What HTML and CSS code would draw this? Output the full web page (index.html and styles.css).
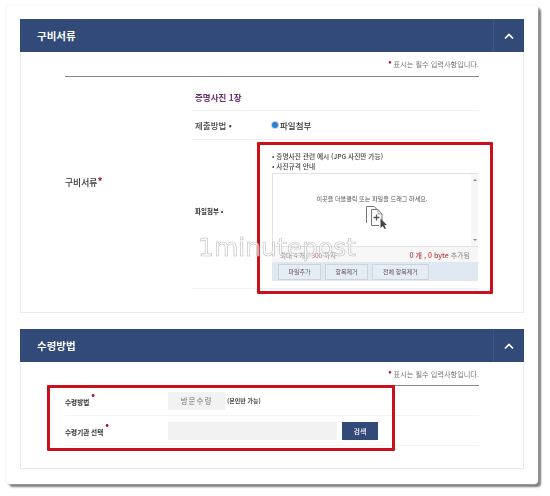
FILE: index.html
```html
<!DOCTYPE html>
<html lang="ko">
<head>
<meta charset="utf-8">
<title>구비서류</title>
<link rel="stylesheet" href="styles.css">
</head>
<body>
<main class="card">
  <section class="panel">
    <header class="panel-head">
      <h2>구비서류</h2>
      <span class="toggle"><svg width="12" height="8" viewBox="0 0 12 8"><path d="M2 6.500 6 2.500l4 4" fill="none" stroke="#fff" stroke-width="1.700"/></svg></span>
    </header>
    <div class="panel-body docs-body">
      <p class="note note-tall"><i>•</i> 표시는 필수 입력사항입니다.</p>
      <div class="doc-table">
        <div class="doc-label">구비서류<i>*</i></div>
        <div class="doc-rows">
          <div class="row-title">증명사진 1장</div>
          <div class="row-method">
            <span class="method-label">제출방법 •</span>
            <span class="radio"></span>
            <span class="method-value">파일첨부</span>
          </div>
          <div class="row-file">
            <span class="file-label">파일첨부 •</span>
            <div class="file-content">
              <ul class="hints">
                <li>• 증명사진 관련 예시 (JPG 사진만 가능)</li>
                <li>• 사진규격 안내</li>
              </ul>
              <div class="uploader">
                <div class="drop">
                  <div class="drop-main">
                    <p>이곳을 더블클릭 또는 파일을 드래그 하세요.</p>
                    <svg class="drop-icon" width="24" height="24" viewBox="0 0 24 24">
                      <path d="M1.500 18V1.500H9l3 3" fill="none" stroke="#777"/>
                      <path d="M6.500 20.500V4.500H13l4 4.500v7M6.500 20.500H14" fill="#fff" stroke="#777"/>
                      <path d="M13 4.500V9h4" fill="none" stroke="#999"/>
                      <path d="M11.500 9.500v6M8.500 12.500h6" stroke="#555" stroke-width="1.300"/>
                      <path d="M15.500 13.500l6.500 6.500-2.800.3 1.800 3-1.500.7-1.700-3-2.300 2z" fill="#444"/>
                    </svg>
                  </div>
                  <div class="scroll"><span class="up"></span><span class="down"></span></div>
                </div>
                <div class="status">
                  <span class="limit">최대 4 개 / <b>300</b> 까지</span>
                  <span class="count"><b>0 개 , 0 byte</b> 추가됨</span>
                </div>
                <div class="actions">
                  <span class="act">파일추가</span>
                  <span class="act">항목제거</span>
                  <span class="act wide">전체 항목제거</span>
                </div>
              </div>
            </div>
          </div>
        </div>
      </div>
      <div class="red-box red-one"></div>
      <div class="watermark">1minutepost</div>
    </div>
  </section>

  <section class="panel second">
    <header class="panel-head">
      <h2>수령방법</h2>
      <span class="toggle"><svg width="12" height="8" viewBox="0 0 12 8"><path d="M2 6.500 6 2.500l4 4" fill="none" stroke="#fff" stroke-width="1.700"/></svg></span>
    </header>
    <div class="panel-body receive-body">
      <p class="note"><i>•</i> 표시는 필수 입력사항입니다.</p>
      <div class="receive-rows">
        <div class="receive-row">
          <span class="receive-label">수령방법<i>•</i></span>
          <span class="field short">방문수령</span>
          <span class="only">(본인만 가능)</span>
        </div>
        <div class="receive-row">
          <span class="receive-label">수령기관 선택<i>•</i></span>
          <span class="field long"></span>
          <span class="search">검색</span>
        </div>
      </div>
      <div class="red-box red-two"></div>
    </div>
  </section>
</main>
</body>
</html>
```
FILE: styles.css
```css
* { box-sizing: border-box; }
html, body { margin: 0; padding: 0; background: #fff; }
body {
  width: 550px;
  height: 496px;
  overflow: hidden;
  font-family: "Noto Sans CJK KR", "Noto Sans", sans-serif;
  color: #333;
}
.card {
  margin: 5px 0 0 6px;
  width: 532px;
  height: 479px;
  padding: 14px;
  background: #fff;
  border-radius: 4px;
  box-shadow: 0 0 2px #ddd, 3px 3px 2px #7c7c7c;
  filter: blur(.35px);
}
.panel.second { margin-top: 16px; }
.panel-head {
  height: 33px;
  display: flex;
  align-items: center;
  justify-content: space-between;
  background: #324a78;
  color: #fff;
}
.panel-head h2 {
  margin: 0 0 0 17px;
  font-size: 10.500px;
  font-weight: 700;
}
.toggle {
  width: 31px;
  height: 100%;
  display: flex;
  align-items: center;
  justify-content: center;
  border-left: 1px solid #3f5784;
}
.panel-body {
  position: relative;
  padding: 0 44px;
  border: 1px solid #e9e9e9;
  border-top: 0;
}
.docs-body { height: 261px; }
.receive-body { height: 107px; }
.note {
  margin: 0;
  height: 24px;
  padding-top: 6px;
  text-align: right;
  font-size: 7.200px;
  line-height: 11px;
  color: #777;
  border-bottom: 1px solid #888;
}
.note-tall { height: 25px; }
.note i {
  color: #b3122a;
  font-style: normal;
  font-size: 10px;
  line-height: 6px;
  vertical-align: 2px;
}
.doc-table { display: flex; }
.doc-label {
  width: 127px;
  display: flex;
  align-items: flex-start;
  padding-top: 99px;
  font-size: 8.800px;
  font-weight: 500;
  color: #333;
}
.doc-label i { color: #b3122a; font-style: normal; font-size: 10px; line-height: 9px; font-weight: 700; }
.doc-rows { flex: 1; }
.row-title {
  height: 34px;
  padding: 13px 0 0 3px;
  font-size: 8.500px;
  line-height: 14px;
  font-weight: 700;
  color: #6b2f73;
  border-bottom: 1px solid #f0f0f0;
}
.row-method {
  height: 29px;
  display: flex;
  align-items: center;
  padding-left: 3px;
  border-bottom: 1px solid #f0f0f0;
}
.method-label { width: 77px; font-size: 8.500px; font-weight: 500; color: #444; }
.radio {
  width: 6px;
  height: 6px;
  border-radius: 50%;
  background: #2f7fd0;
  box-shadow: 0 0 0 1px #bcd6ef;
  margin-right: 2px;
}
.method-value { font-size: 8.500px; font-weight: 500; color: #333; }
.row-file {
  height: 149px;
  display: flex;
  align-items: flex-start;
  border-bottom: 1px solid #f0f0f0;
}
.file-label {
  width: 80px;
  padding: 65px 0 0 3px;
  font-size: 6.500px;
  line-height: 12px;
  font-weight: 700;
  color: #333;
}
.file-content { width: 206px; padding-top: 11px; }
.hints { margin: 0 0 2px; padding: 0; list-style: none; font-size: 6.700px; line-height: 10px; font-weight: 500; color: #444; }
.uploader { width: 206px; }
.drop {
  height: 74px;
  display: flex;
  border: 1px solid #e2e2e2;
  border-right: 0;
}
.drop-main { flex: 1; text-align: center; }
.drop-main p { margin: 20px 0 2px; font-size: 6.100px; line-height: 9px; color: #555; }
.drop-icon { display: inline-block; vertical-align: top; margin-left: 9px; }
.scroll {
  width: 7px;
  display: flex;
  flex-direction: column;
  justify-content: space-between;
  align-items: center;
  padding: 5px 0;
  background: #f7f7f7;
}
.up { border: 2px solid transparent; border-bottom: 2px solid #888; border-top: 0; }
.down { border: 2px solid transparent; border-top: 2px solid #888; border-bottom: 0; }
.status {
  height: 15px;
  display: flex;
  align-items: center;
  justify-content: space-between;
  padding: 0 8px;
  background: #f7f7f7;
  font-size: 6.500px;
  color: #888;
}
.limit b { color: #b56b7a; font-weight: 400; }
.count { font-size: 7px; }
.count b { color: #b5413f; font-weight: 500; }
.actions {
  height: 19px;
  display: flex;
  align-items: center;
  gap: 4px;
  padding-left: 6px;
  background: #dfe7f0;
}
.act {
  width: 43px;
  height: 16px;
  display: flex;
  align-items: center;
  justify-content: center;
  font-size: 6px;
  color: #555;
  border: 1px solid #ccd5df;
  background: #e6ecf3;
}
.act.wide { width: 57px; }
.red-box {
  position: absolute;
  border: 3px solid #c9101b;
  border-radius: 1px;
  pointer-events: none;
}
.red-one { left: 236px; top: 90px; width: 236px; height: 152px; }
.red-two { left: 26px; top: 23px; width: 348px; height: 66px; }
.watermark {
  position: absolute;
  left: 177px;
  top: 179px;
  font-family: "DejaVu Sans", sans-serif;
  font-size: 25px;
  line-height: 34px;
  color: rgba(255, 255, 255, .6);
  -webkit-text-stroke: .6px #bdbdbd;
  white-space: nowrap;
}
.receive-row {
  height: 30px;
  display: flex;
  align-items: center;
  border-bottom: 1px solid #f3f3f3;
}
.receive-label {
  width: 103px;
  margin-top: -3px;
  font-size: 6.600px;
  font-weight: 700;
  color: #333;
}
.receive-label i {
  color: #b3122a;
  font-style: normal;
  font-size: 10px;
  line-height: 6px;
  vertical-align: 7px;
  margin-left: 2px;
}
.field { height: 18px; background: #f2f2f2; }
.field.short {
  width: 57px;
  display: flex;
  align-items: center;
  justify-content: center;
  font-size: 7.500px;
  letter-spacing: 1px;
  color: #777;
}
.field.long { width: 169px; }
.only { margin-left: 2px; font-size: 6px; font-weight: 700; color: #444; }
.search {
  width: 36px;
  height: 18px;
  margin-left: 5px;
  display: flex;
  align-items: center;
  justify-content: center;
  background: #324a78;
  color: #fff;
  font-size: 7px;
  font-weight: 500;
}
```
